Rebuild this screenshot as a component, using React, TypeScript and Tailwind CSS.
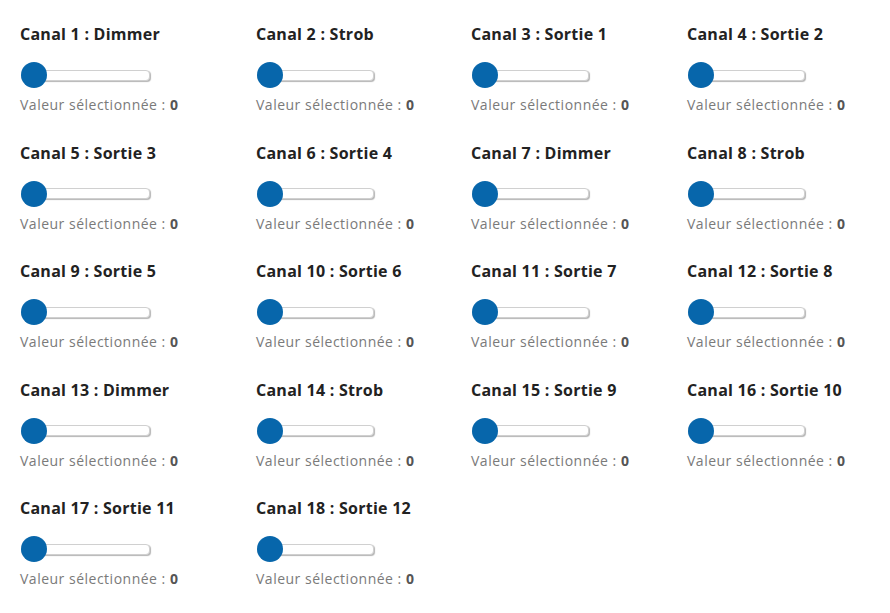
const CHANNELS = [
  "Dimmer", "Strob", "Sortie 1", "Sortie 2",
  "Sortie 3", "Sortie 4", "Dimmer", "Strob",
  "Sortie 5", "Sortie 6", "Sortie 7", "Sortie 8",
  "Dimmer", "Strob", "Sortie 9", "Sortie 10",
  "Sortie 11", "Sortie 12",
];

function ChannelSlider({ index, name, wide }: { index: number; name: string; wide: boolean }) {
  const value = 0;
  return (
    <div className="flex flex-col h-[118.5px]">
      <h3 className="text-[16px] leading-6 font-bold tracking-[0.25px] text-[#222]">
        Canal {index} : {name}
      </h3>
      <div className={`relative mt-4 h-[26px] flex items-center ${wide ? "w-[130px]" : "w-[118px]"}`}>
        <div className="ml-[1px] h-[11px] flex-1 rounded-[4px] border border-[#d0d0d0] bg-white shadow-[1px_1px_1px_#b5b5b5]" />
        <div className="absolute left-[1px] top-0 h-[26px] w-[26px] rounded-full bg-[#0766ab]" />
      </div>
      <p className="mt-[7px] text-[14px] leading-5 tracking-[0.5px] text-[#7a7a7a]">
        Valeur sélectionnée : <span className="font-bold text-[#555]">{value}</span>
      </p>
    </div>
  );
}

export default function App() {
  return (
    <div
      className="min-h-screen bg-white pl-5 pt-[22px]"
      style={{ fontFamily: '"Open Sans", "Noto Sans", sans-serif' }}
    >
      <div className="grid grid-cols-[236px_215px_216px_1fr]">
        {CHANNELS.map((name, i) => (
          <ChannelSlider key={i} index={i + 1} name={name} wide={i % 4 === 0} />
        ))}
      </div>
    </div>
  );
}
